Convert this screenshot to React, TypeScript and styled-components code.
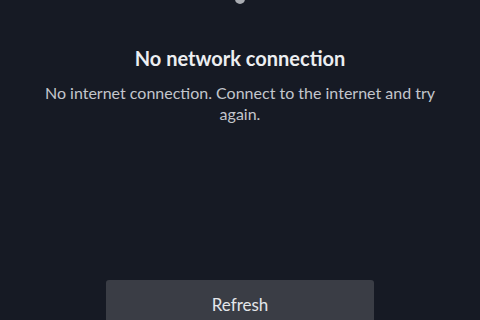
import React from "react";
import styled, { createGlobalStyle } from "styled-components";

const Global = createGlobalStyle`
  html, body { margin: 0; padding: 0; background: #161a24; }
  body { font-family: "Lato", "Open Sans", sans-serif; }
`;

const Screen = styled.div`
  width: 480px;
  height: 320px;
  background: #161a24;
  display: flex;
  flex-direction: column;
  align-items: center;
  overflow: hidden;
  position: relative;
`;

const Dot = styled.div`
  position: absolute;
  top: -6px;
  left: 235px;
  width: 10px;
  height: 10px;
  border-radius: 50%;
  background: #a9acb2;
`;

const Title = styled.h1`
  margin: 45px 0 0;
  font-family: "Lato", sans-serif;
  font-weight: 700;
  font-size: 20px;
  line-height: 26px;
  color: #eceef1;
  text-align: center;
`;

const Message = styled.p`
  margin: 11px 0 0;
  width: 420px;
  font-family: "Lato", sans-serif;
  font-weight: 400;
  font-size: 16px;
  line-height: 21px;
  color: #c3c6cc;
  text-align: center;
`;

const Spacer = styled.div`
  flex: 1;
`;

const Button = styled.button`
  width: 268px;
  height: 48px;
  margin-bottom: -8px;
  border: none;
  border-radius: 3px;
  background: #3a3d45;
  color: #e4e6ea;
  font-family: "Lato", sans-serif;
  font-size: 17px;
  padding: 0;
  flex-shrink: 0;
`;

export default function App() {
  return (
    <>
      <Global />
      <Screen>
        <Dot />
        <Title>No network connection</Title>
        <Message>No internet connection. Connect to the internet and try again.</Message>
        <Spacer />
        <Button>Refresh</Button>
      </Screen>
    </>
  );
}
